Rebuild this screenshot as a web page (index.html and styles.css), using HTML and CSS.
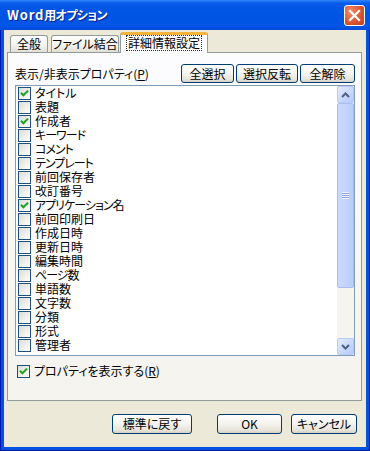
FILE: index.html
```html
<!DOCTYPE html>
<html lang="ja">
<head>
<meta charset="utf-8">
<link rel="stylesheet" href="styles.css">
</head>
<body>
<div class="window">
  <div class="titlebar">
    <span class="title">Word<span class="jp">用オプション</span></span>
    <span class="close"><svg width="13" height="13" viewBox="0 0 13 13"><path d="M2 2 L11 11 M11 2 L2 11" stroke="#fff" stroke-width="2.2" stroke-linecap="square"/></svg></span>
  </div>
  <div class="client">
    <div class="tabs">
      <div class="tab t1">全般</div>
      <div class="tab t2">ファイル結合</div>
      <div class="tab t3 active"><span class="focus">詳細情報設定</span></div>
    </div>
    <div class="panel">
      <div class="toprow">
        <span class="label">表示/非表示プロパティ(<u>P</u>)</span>
        <div class="btns">
          <span class="btn b1">全選択</span>
          <span class="btn b2">選択反転</span>
          <span class="btn b3">全解除</span>
        </div>
      </div>
      <div class="listbox">
        <ul class="items">
          <li><span class="cb on"><svg width="9" height="9" viewBox="0 0 9 9"><path d="M1 3.8 L3.4 6.3 L8 1.6" stroke="#21A121" stroke-width="2" fill="none"/></svg></span><span class="txt">タイトル</span></li>
          <li><span class="cb"></span><span class="txt">表題</span></li>
          <li><span class="cb on"><svg width="9" height="9" viewBox="0 0 9 9"><path d="M1 3.8 L3.4 6.3 L8 1.6" stroke="#21A121" stroke-width="2" fill="none"/></svg></span><span class="txt">作成者</span></li>
          <li><span class="cb"></span><span class="txt kana">キーワード</span></li>
          <li><span class="cb"></span><span class="txt kana">コメント</span></li>
          <li><span class="cb"></span><span class="txt kana">テンプレート</span></li>
          <li><span class="cb"></span><span class="txt">前回保存者</span></li>
          <li><span class="cb"></span><span class="txt">改訂番号</span></li>
          <li><span class="cb on"><svg width="9" height="9" viewBox="0 0 9 9"><path d="M1 3.8 L3.4 6.3 L8 1.6" stroke="#21A121" stroke-width="2" fill="none"/></svg></span><span class="txt kana">アプリケーション名</span></li>
          <li><span class="cb"></span><span class="txt">前回印刷日</span></li>
          <li><span class="cb"></span><span class="txt">作成日時</span></li>
          <li><span class="cb"></span><span class="txt">更新日時</span></li>
          <li><span class="cb"></span><span class="txt">編集時間</span></li>
          <li><span class="cb"></span><span class="txt kana">ページ数</span></li>
          <li><span class="cb"></span><span class="txt">単語数</span></li>
          <li><span class="cb"></span><span class="txt">文字数</span></li>
          <li><span class="cb"></span><span class="txt">分類</span></li>
          <li><span class="cb"></span><span class="txt">形式</span></li>
          <li><span class="cb"></span><span class="txt">管理者</span></li>
        </ul>
        <div class="scrollbar">
          <span class="sbtn"><svg width="9" height="6" viewBox="0 0 9 6"><path d="M1 5 L4.5 1.5 L8 5" stroke="#4D6185" stroke-width="2" fill="none"/></svg></span>
          <span class="thumb"><span class="grip"></span></span>
          <span class="track"></span>
          <span class="sbtn"><svg width="9" height="6" viewBox="0 0 9 6"><path d="M1 1 L4.5 4.5 L8 1" stroke="#4D6185" stroke-width="2" fill="none"/></svg></span>
        </div>
      </div>
      <div class="showprops"><span class="cb on"><svg width="9" height="9" viewBox="0 0 9 9"><path d="M1 3.8 L3.4 6.3 L8 1.6" stroke="#21A121" stroke-width="2" fill="none"/></svg></span><span class="txt">プロパティを表示する(<u>R</u>)</span></div>
    </div>
    <div class="footer">
      <span class="btn f1">標準に戻す</span>
      <span class="btn f2">OK</span>
      <span class="btn f3">キャンセル</span>
    </div>
  </div>
</div>
</body>
</html>
```
FILE: styles.css
```css
* { box-sizing: border-box; margin: 0; padding: 0; }
body {
  margin: 0;
  width: 370px;
  height: 451px;
  overflow: hidden;
  background: #fff;
  font-family: "Noto Sans CJK JP", "Noto Sans", sans-serif;
  font-size: 12px;
  font-feature-settings: "palt";
  color: #000;
}
.window {
  width: 370px;
  height: 451px;
  display: flex;
  flex-direction: column;
  background: #0053E2;
  box-shadow: inset 1px 0 0 #0019A8, inset -1px 0 0 #001A9C, inset 0 -1px 0 #001A9C;
}
.titlebar {
  height: 30px;
  flex: none;
  display: flex;
  align-items: center;
  justify-content: space-between;
  padding: 0 5px 0 7px;
  background: linear-gradient(#2F86FA 0, #0A5DEC 3px, #0256E6 7px, #0054E3 18px, #0157E8 26px, #0049D8 30px);
}
.title {
  color: #fff;
  font-weight: bold;
  font-size: 13px;
  letter-spacing: 0.8px;
  text-shadow: 1px 1px 0 #0A1E8A;
  line-height: 16px;
}
.title .jp {
  font-size: 12px;
  letter-spacing: -0.6px;
}
.close {
  width: 21px;
  height: 21px;
  border: 1px solid #fff;
  border-radius: 3px;
  background: radial-gradient(circle at 30% 30%, #EE8C6E, #D8532F 60%, #C23C1A);
  display: flex;
  align-items: center;
  justify-content: center;
}
.client {
  flex: 1;
  margin: 0 4px 4px 4px;
  background: #ECE9D8;
  padding: 2px 4px 0 3px;
  display: flex;
  flex-direction: column;
}
.tabs {
  display: flex;
  align-items: flex-end;
  height: 21px;
  padding-left: 3px;
  margin-bottom: -1px;
  position: relative;
  z-index: 1;
}
.tab {
  height: 17px;
  margin-bottom: 1px;
  border: 1px solid #919B9C;
  border-bottom: none;
  border-radius: 3px 3px 0 0;
  background: linear-gradient(#FFFFFF, #F3F2EC 60%, #E2DFD4);
  line-height: 15px;
  text-align: center;
}
.t1 { width: 38px; margin-right: 3px; }
.t2 { width: 68px; margin-right: 1px; }
.t3 { width: 88px; }
.tab.active {
  height: 21px;
  margin-bottom: 0;
  border-top: 3px solid #F5B33C;
  background: #FCFCFE;
  padding-top: 1px;
  line-height: 14px;
}
.focus {
  display: inline-block;
  outline: 1px dotted #333;
  padding: 0 1px;
  line-height: 14px;
}
.panel {
  height: 349px;
  border: 1px solid #919B9C;
  background: linear-gradient(#FCFCFE, #F4F3EE);
  padding: 11px 6px 0 7px;
  display: flex;
  flex-direction: column;
}
.toprow {
  height: 19px;
  display: flex;
  align-items: center;
  justify-content: space-between;
}
.label { line-height: 14px; padding-top: 1px; }
.btns { display: flex; gap: 2px; }
.btn {
  height: 19px;
  display: inline-flex;
  align-items: center;
  justify-content: center;
  border: 1px solid #003C74;
  border-radius: 3px;
  background: linear-gradient(#FFFFFF, #F4F3EE 50%, #E6E3D8 85%, #D6D0C5);
  line-height: 14px;
}
.b1 { width: 53px; }
.b2 { width: 62px; }
.b3 { width: 55px; }
.listbox {
  margin-top: 2px;
  height: 271px;
  border: 1px solid #7F9DB9;
  background: #fff;
  display: flex;
}
.items {
  flex: 1;
  list-style: none;
  padding: 0 0 0 2px;
}
.items li {
  height: 14px;
  display: flex;
  align-items: center;
  gap: 4px;
  white-space: nowrap;
}
.txt { line-height: 14px; }
.kana { letter-spacing: -1px; }
.cb {
  width: 13px;
  height: 13px;
  flex: none;
  border: 1px solid #1C5180;
  background: linear-gradient(135deg, #DCDCD6, #F4F4F1 70%, #FFFFFF);
  display: flex;
  align-items: center;
  justify-content: center;
}
.scrollbar {
  width: 17px;
  flex: none;
  display: flex;
  flex-direction: column;
  background: #F5F4EE;
}
.sbtn {
  height: 17px;
  flex: none;
  border: 1px solid #B7CBF5;
  border-radius: 2px;
  background: linear-gradient(135deg, #E3EBFE, #C6D6FC 60%, #B6C9F7);
  display: flex;
  align-items: center;
  justify-content: center;
}
.thumb {
  height: 185px;
  flex: none;
  border: 1px solid #A9BEEF;
  border-radius: 2px;
  background: linear-gradient(90deg, #CAD9FD, #C3D4FC 50%, #B9CCF8);
  display: flex;
  align-items: center;
  justify-content: center;
}
.grip {
  width: 7px;
  height: 7px;
  background: repeating-linear-gradient(#EEF3FE 0, #EEF3FE 1px, #8CA5E0 1px, #8CA5E0 2px);
}
.track { flex: 1; }
.showprops {
  margin-top: 8px;
  padding-left: 2px;
  height: 14px;
  display: flex;
  align-items: center;
  gap: 4px;
}
.footer {
  display: flex;
  justify-content: flex-end;
  padding: 13px 5px 0 0;
}
.footer .btn { height: 20px; }
.f1 { width: 80px; margin-right: 25px; }
.f2 { width: 65px; margin-right: 9px; }
.f3 { width: 66px; }
```
